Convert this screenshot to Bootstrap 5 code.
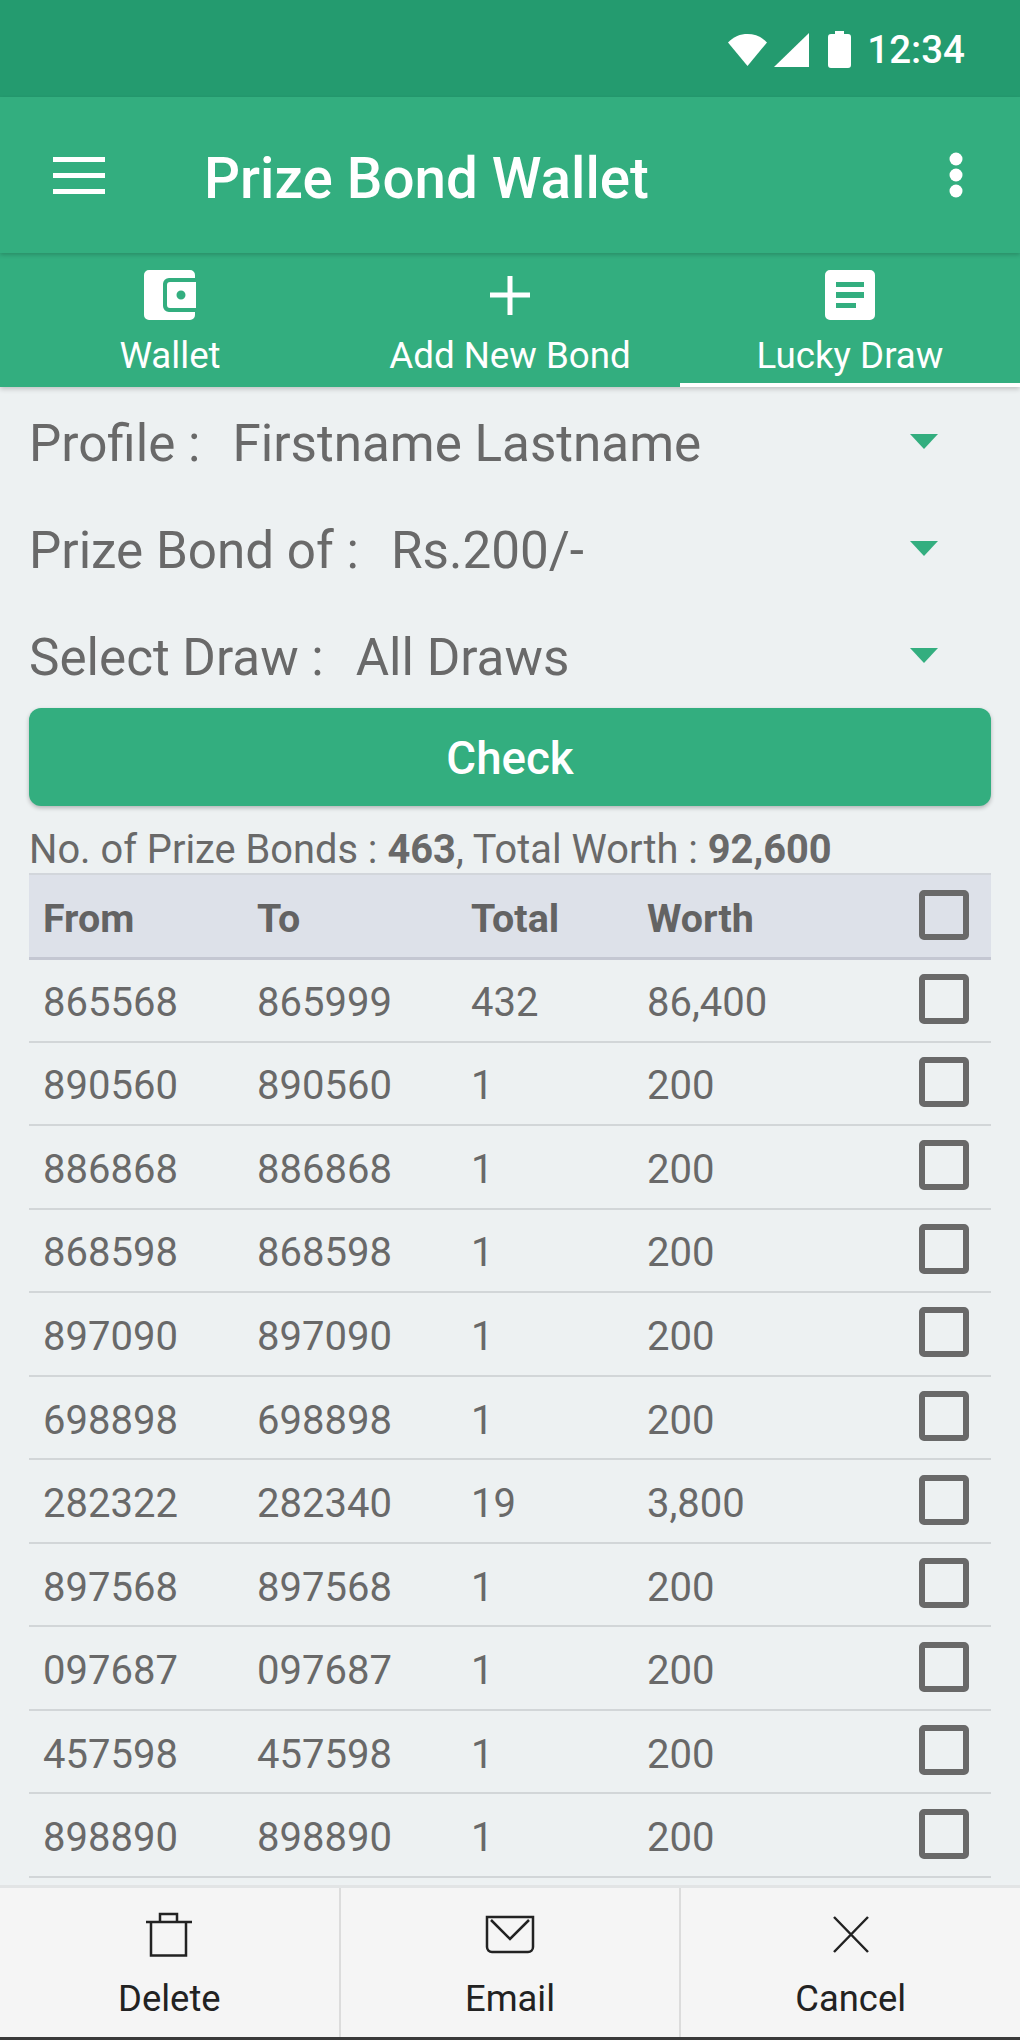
<!DOCTYPE html>
<html lang="en">
<head>
<meta charset="utf-8">
<title>Prize Bond Wallet</title>
<link href="https://cdn.jsdelivr.net/npm/bootstrap@5.3.0/dist/css/bootstrap.min.css" rel="stylesheet">
<style>
html,body{margin:0;background:#edf1f2;}
body{font-family:Roboto,"Liberation Sans",sans-serif;color:#696969;}
.app-root{width:1020px;height:2040px;overflow:hidden;background:#edf1f2;}
.status-strip{height:97px;background:#249b6f;color:#fff;padding-right:55px;font-size:38.5px;font-weight:500;padding-top:2px;}
.status-strip .clock{margin-left:16px;line-height:1;padding-top:1px;}
.sig-glyph{margin-left:6px;}
.bat-glyph{margin-left:18px;}
.tool-strip{height:156px;background:#33ae7f;color:#fff;box-shadow:0 2px 4px rgba(0,0,0,.18);position:relative;z-index:2;}
.tool-title{font-size:56.5px;font-weight:500;margin-left:99px;line-height:1;padding-top:8px;}
.menu-glyph{margin-left:53px;width:52px;height:37px;flex:none;}
.dots-glyph{margin-right:57px;width:14px;height:46px;flex:none;}
.tab-strip{height:134px;background:#33ae7f;color:#fff;box-shadow:0 2px 5px rgba(0,0,0,.2);position:relative;z-index:1;}
.tab-cell{flex:1 1 0;height:134px;padding-top:17px;border-bottom:4px solid transparent;}
.tab-cell.on{border-bottom-color:#fff;}
.tab-icon{height:50px;display:block;}
.tab-name{font-size:36.7px;line-height:1;margin-top:18px;}
.pick-area{padding-top:7px;gap:7px;}
.pick-row{height:100px;padding-left:29px;padding-right:82px;font-size:51.2px;line-height:1;white-space:nowrap;}
.pick-row .pick-val{margin-left:32px;}
.pick-caret{width:0;height:0;border-left:14px solid transparent;border-right:14px solid transparent;border-top:15px solid #33ae7f;margin-left:auto;margin-top:-6px;}
.check-btn{display:block;margin:0 29px;width:962px;height:98px;background:#33ae7f;border:0;border-radius:12px;color:#fff;font-size:45.7px;font-weight:500;box-shadow:0 2px 4px rgba(0,0,0,.25);padding:5px 0 0;}
.check-btn:hover{background:#33ae7f;color:#fff;}
.sum-line{margin:21px 29px 0;font-size:39.8px;line-height:46px;height:46px;white-space:nowrap;}
.sum-line b{font-weight:700;}
.bond-wrap{margin:0 29px;}
.bond-table{width:962px;table-layout:fixed;margin:0;--bs-table-bg:transparent;--bs-table-color:#696969;border-top:2px solid #d2d6db;}
.bond-table th,.bond-table td{height:83.55px;padding:6px 0 0 14px;vertical-align:middle;font-size:40px;border-bottom:2px solid #d2d6d8;line-height:1;background:transparent;box-shadow:none;color:#696969;}
.bond-table thead th{height:84px;background:#dde1e9;font-size:39.4px;font-weight:700;border-bottom:3px solid #c4c7d2;color:#636363;}
.col-a{width:214px;}.col-c{width:176px;}.col-d{width:272px;}.col-e{width:86px;}
.bond-table .tick,.bond-table thead .tick{padding:0;}
.tick-box{display:block;width:50px;height:50px;border:6px solid #696969;border-radius:5px;margin-left:14px;margin-top:-3px;background:transparent;}
thead .tick-box{margin-top:-1px;}
.foot-bar{height:155px;background:#f5f5f5;border-top:3px solid #e2e4e5;border-bottom:3px solid #3a3a3a;color:#222;margin-top:auto;}
.foot-cell{flex:1 1 0;height:100%;padding-top:23px;border-left:2px solid #dcdcdc;}
.foot-cell:first-child{border-left:0;}
.foot-icon{height:48px;display:block;}
.foot-name{font-size:36.4px;line-height:1;margin-top:22px;}
</style>
</head>
<body>
<div class="app-root d-flex flex-column">
  <div class="status-strip d-flex align-items-center justify-content-end">
    <svg width="40" height="33" viewBox="0 0 40 33" aria-hidden="true"><path d="M0 9.500C5.500 3.500 12.500 1 19.500 1S33.500 3.500 39 9.500L19.500 33Z" fill="#fff"/></svg>
    <svg class="sig-glyph" width="36" height="34" viewBox="0 0 36 34" aria-hidden="true"><path d="M35 0V34H0Z" fill="#fff"/></svg>
    <svg class="bat-glyph" width="23" height="37" viewBox="0 0 23 37" aria-hidden="true"><path d="M7 0H16V3H20A3 3 0 0 1 23 6V34A3 3 0 0 1 20 37H3A3 3 0 0 1 0 34V6A3 3 0 0 1 3 3H7Z" fill="#fff"/></svg>
    <span class="clock">12:34</span>
  </div>
  <div class="tool-strip d-flex align-items-center">
    <svg class="menu-glyph" viewBox="0 0 52 37" aria-hidden="true"><path d="M0 0H52V5H0ZM0 16H52V21H0ZM0 32H52V37H0Z" fill="#fff"/></svg>
    <span class="tool-title">Prize Bond Wallet</span>
    <svg class="dots-glyph ms-auto" viewBox="0 0 14 46" aria-hidden="true"><circle cx="7" cy="7" r="6.500" fill="#fff"/><circle cx="7" cy="23" r="6.500" fill="#fff"/><circle cx="7" cy="39" r="6.500" fill="#fff"/></svg>
  </div>
  <div class="tab-strip d-flex">
    <div class="tab-cell d-flex flex-column align-items-center">
      <svg class="tab-icon" width="52" height="50" viewBox="0 0 52 50" aria-hidden="true"><path fill="#fff" d="M5 0H46A5 5 0 0 1 51 5V8H25A6 6 0 0 0 19 14V36A6 6 0 0 0 25 42H51V45A5 5 0 0 1 46 50H5A5 5 0 0 1 0 45V5A5 5 0 0 1 5 0Z"/><path fill="#fff" fill-rule="evenodd" d="M26 12H52V38H26A3 3 0 0 1 23 35V15A3 3 0 0 1 26 12ZM37 20.500A4.500 4.500 0 1 0 37 29.500A4.500 4.500 0 1 0 37 20.500Z"/></svg>
      <span class="tab-name">Wallet</span>
    </div>
    <div class="tab-cell d-flex flex-column align-items-center">
      <svg class="tab-icon" width="42" height="50" viewBox="0 0 42 50" aria-hidden="true"><path fill="#fff" d="M18.500 6H23.500V22.500H41V27.500H23.500V45H18.500V27.500H1V22.500H18.500Z"/></svg>
      <span class="tab-name">Add New Bond</span>
    </div>
    <div class="tab-cell on d-flex flex-column align-items-center">
      <svg class="tab-icon" width="50" height="50" viewBox="0 0 50 50" aria-hidden="true"><path fill="#fff" fill-rule="evenodd" d="M5 0H45A5 5 0 0 1 50 5V45A5 5 0 0 1 45 50H5A5 5 0 0 1 0 45V5A5 5 0 0 1 5 0ZM11 12V17H39V12ZM11 22V28H39V22ZM11 33V38H31V33Z"/></svg>
      <span class="tab-name">Lucky Draw</span>
    </div>
  </div>
  <div class="pick-area d-flex flex-column">
    <div class="pick-row d-flex align-items-center"><span>Profile :</span><span class="pick-val">Firstname Lastname</span><span class="pick-caret"></span></div>
    <div class="pick-row d-flex align-items-center"><span>Prize Bond of :</span><span class="pick-val">Rs.200/-</span><span class="pick-caret"></span></div>
    <div class="pick-row d-flex align-items-center"><span>Select Draw :</span><span class="pick-val">All Draws</span><span class="pick-caret"></span></div>
  </div>
  <button type="button" class="btn check-btn">Check</button>
  <div class="sum-line">No. of Prize Bonds : <b>463</b>, Total Worth : <b>92,600</b></div>
  <div class="bond-wrap">
    <table class="table bond-table">
      <colgroup><col class="col-a"><col class="col-a"><col class="col-c"><col class="col-d"><col class="col-e"></colgroup>
      <thead><tr><th>From</th><th>To</th><th>Total</th><th>Worth</th><th class="tick"><span class="tick-box"></span></th></tr></thead>
      <tbody>
        <tr><td>865568</td><td>865999</td><td>432</td><td>86,400</td><td class="tick"><span class="tick-box"></span></td></tr>
        <tr><td>890560</td><td>890560</td><td>1</td><td>200</td><td class="tick"><span class="tick-box"></span></td></tr>
        <tr><td>886868</td><td>886868</td><td>1</td><td>200</td><td class="tick"><span class="tick-box"></span></td></tr>
        <tr><td>868598</td><td>868598</td><td>1</td><td>200</td><td class="tick"><span class="tick-box"></span></td></tr>
        <tr><td>897090</td><td>897090</td><td>1</td><td>200</td><td class="tick"><span class="tick-box"></span></td></tr>
        <tr><td>698898</td><td>698898</td><td>1</td><td>200</td><td class="tick"><span class="tick-box"></span></td></tr>
        <tr><td>282322</td><td>282340</td><td>19</td><td>3,800</td><td class="tick"><span class="tick-box"></span></td></tr>
        <tr><td>897568</td><td>897568</td><td>1</td><td>200</td><td class="tick"><span class="tick-box"></span></td></tr>
        <tr><td>097687</td><td>097687</td><td>1</td><td>200</td><td class="tick"><span class="tick-box"></span></td></tr>
        <tr><td>457598</td><td>457598</td><td>1</td><td>200</td><td class="tick"><span class="tick-box"></span></td></tr>
        <tr><td>898890</td><td>898890</td><td>1</td><td>200</td><td class="tick"><span class="tick-box"></span></td></tr>
      </tbody>
    </table>
  </div>
  <div class="foot-bar d-flex">
    <div class="foot-cell d-flex flex-column align-items-center">
      <svg class="foot-icon" width="48" height="48" viewBox="0 0 48 48" aria-hidden="true"><g fill="none" stroke="#222" stroke-width="2.500"><path d="M1 11H47"/><path d="M6 11V44.500H41V11"/><path d="M15 11V3H32V11"/></g></svg>
      <span class="foot-name">Delete</span>
    </div>
    <div class="foot-cell d-flex flex-column align-items-center">
      <svg class="foot-icon" width="50" height="48" viewBox="0 0 50 48" aria-hidden="true"><g fill="none" stroke="#222" stroke-width="2.500"><path d="M2 6H48V36A5 5 0 0 1 43 41H7A5 5 0 0 1 2 36Z"/><path d="M6 9L25 28L44 9"/></g></svg>
      <span class="foot-name">Email</span>
    </div>
    <div class="foot-cell d-flex flex-column align-items-center">
      <svg class="foot-icon" width="38" height="48" viewBox="0 0 38 48" aria-hidden="true"><path d="M2 6L36 41M36 6L2 41" fill="none" stroke="#222" stroke-width="2.500"/></svg>
      <span class="foot-name">Cancel</span>
    </div>
  </div>
</div>
<script src="https://cdn.jsdelivr.net/npm/bootstrap@5.3.0/dist/js/bootstrap.bundle.min.js"></script>
</body>
</html>
